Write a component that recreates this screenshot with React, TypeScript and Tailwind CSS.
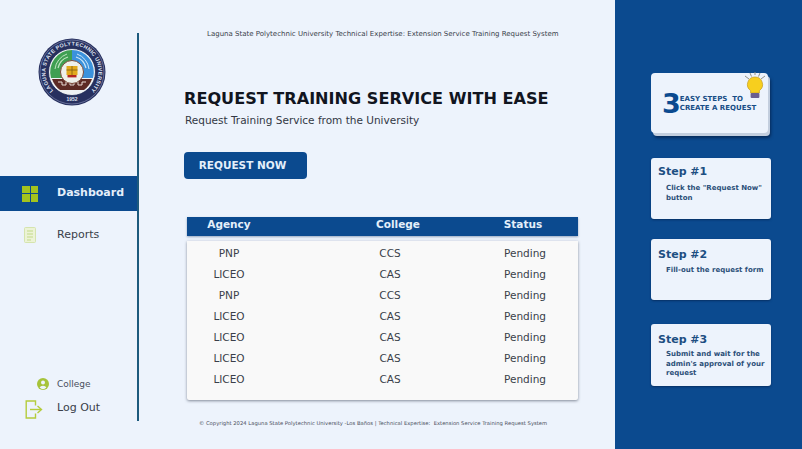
import React from 'react';

const rows = [
  ['PNP', 'CCS', 'Pending'],
  ['LICEO', 'CAS', 'Pending'],
  ['PNP', 'CCS', 'Pending'],
  ['LICEO', 'CAS', 'Pending'],
  ['LICEO', 'CAS', 'Pending'],
  ['LICEO', 'CAS', 'Pending'],
  ['LICEO', 'CAS', 'Pending'],
];

const steps = [
  { title: 'Step #1', text: 'Click the "Request Now" button', h: 'h-[61px]', mt: 'mt-[25px]', pt: 'pt-[7px]', gap: 'mt-[5px]' },
  { title: 'Step #2', text: 'Fill-out the request form', h: 'h-[61px]', mt: 'mt-[20px]', pt: 'pt-[9px]', gap: 'mt-[4px]' },
  { title: 'Step #3', text: "Submit and wait for the admin's approval of your request", h: 'h-[62px]', mt: 'mt-[24px]', pt: 'pt-[9px]', gap: 'mt-[3px]' },
];

const Seal: React.FC = () => (
  <svg width="68" height="68" viewBox="0 0 68 68">
    <defs>
      <path id="sealTop" d="M34 34 m-26.5 0 a26.5 26.5 0 1 1 53 0 a26.5 26.5 0 1 1 -53 0" />
    </defs>
    <circle cx="34" cy="34" r="33.5" fill="#27305f" />
    <circle cx="34" cy="34" r="32" fill="none" stroke="#8f97bd" strokeWidth="0.6" />
    <text transform="rotate(-45 34 34)" fontSize="5.4" fontWeight="700" fill="#dfe3f2" fontFamily="'Liberation Sans',sans-serif">
      <textPath href="#sealTop" textLength="124" lengthAdjust="spacing">LAGUNA STATE POLYTECHNIC UNIVERSITY</textPath>
    </text>
    <text x="34" y="63" textAnchor="middle" fontSize="5" fontWeight="700" fill="#dfe3f2" fontFamily="'Liberation Sans',sans-serif">1952</text>
    <circle cx="34" cy="34" r="23.5" fill="#eef1f3" stroke="#1e2a55" strokeWidth="0.8" />
    <path d="M34 12 A22 22 0 0 0 13 40 L34 40 Z" fill="#3f9f52" />
    <path d="M34 12 A22 22 0 0 1 55 40 L34 40 Z" fill="#3b92dc" />
    <path d="M20 30 A15 15 0 0 1 30 19" fill="none" stroke="#bfe3c2" strokeWidth="1.2" />
    <path d="M17 31 A18 18 0 0 1 29 16" fill="none" stroke="#bfe3c2" strokeWidth="1" />
    <path d="M48 30 A15 15 0 0 0 38 19" fill="none" stroke="#cde6f8" strokeWidth="1.2" />
    <path d="M51 31 A18 18 0 0 0 39 16" fill="none" stroke="#cde6f8" strokeWidth="1" />
    <path d="M14 41 L54 41 A22 22 0 0 1 46 52 L22 52 A22 22 0 0 1 14 41 z" fill="#5d2b24" />
    <path d="M20 44 h4 v3 h4 v-3 h4 v3 h4 v-3 h4 v3 h4 v-3 h4" fill="none" stroke="#e9dcd5" strokeWidth="1" />
    <circle cx="34" cy="34" r="11.5" fill="#eef0ea" stroke="#7a4a3a" strokeWidth="1" />
    <rect x="28.5" y="28" width="11" height="9" fill="#e2a91c" />
    <path d="M28.5 32 h11" stroke="#7d5a12" strokeWidth="0.8" />
    <path d="M34 28 v9" stroke="#7d5a12" strokeWidth="0.8" />
    <rect x="29.5" y="37" width="9" height="2.4" fill="#b3261e" />
  </svg>
);

const Bulb: React.FC = () => (
  <svg width="24" height="27" viewBox="0 0 24 27">
    <g stroke="#8f8f86" strokeWidth="1">
      <path d="M2 4 L6 7" />
      <path d="M12 0 V3" />
      <path d="M22 4 L18 7" />
      <path d="M7 1 L8.5 4.5" />
      <path d="M17 1 L15.5 4.5" />
    </g>
    <path d="M12 5 a7.5 7.5 0 0 1 4.4 13.6 V21 H7.6 v-2.4 A7.5 7.5 0 0 1 12 5 z" fill="#f7cf1e" stroke="#c49b1f" strokeWidth="0.7" />
    <rect x="7.6" y="21" width="8.8" height="5" rx="1" fill="#6b5f8f" />
  </svg>
);

const ReportIcon: React.FC = () => (
  <svg width="14" height="18" viewBox="0 0 14 18" fill="none">
    <rect x="1.5" y="1.5" width="11" height="15" rx="1" fill="#ecf3d6" stroke="#d5e4ae" />
    <path d="M4 5h6M4 8h6M4 11h6M4 14h4" stroke="#c3d98a" strokeWidth="1" />
  </svg>
);

const LogOutIcon: React.FC = () => (
  <svg width="18" height="19" viewBox="0 0 18 19" fill="none" stroke="#b4cc3c" strokeWidth="1.4">
    <path d="M10.5 5.5 V1 H1.2 V18 H10.5 V13.5" />
    <path d="M5 9.5 H16" />
    <path d="M12.5 6 L16.5 9.5 L12.5 13" />
  </svg>
);

export default function App() {
  return (
    <div className="flex h-[449px] w-[802px] overflow-hidden bg-[#edf3fc] font-['DejaVu_Sans',sans-serif] text-[#2a2f3a]">
      <aside className="mt-[33px] flex h-[388px] w-[139px] shrink-0 flex-col border-r-2 border-[#1d5a7d]">
        <div className="ml-[38px] mt-[5px]">
          <Seal />
        </div>
        <div className="mt-[70px] flex h-[35px] items-center bg-[#0b4a8f] pl-[22px]">
          <div className="grid h-[16px] w-[16px] grid-cols-2 gap-px">
            <span className="bg-[#a3c31e]" />
            <span className="bg-[#a3c31e]" />
            <span className="bg-[#a3c31e]" />
            <span className="bg-[#a3c31e]" />
          </div>
          <span className="ml-[19px] text-[11px] font-bold text-[#e4effa]">Dashboard</span>
        </div>
        <div className="mt-[15px] flex items-center pl-[23px]">
          <ReportIcon />
          <span className="ml-[20px] text-[11px] text-[#3a3f4a]">Reports</span>
        </div>
        <div className="mt-auto flex items-center pl-[37px]">
          <svg width="12" height="12" viewBox="0 0 12 12">
            <circle cx="6" cy="6" r="6" fill="#a6c33a" />
            <circle cx="6" cy="4.6" r="2" fill="#edf3fc" />
            <path d="M2.6 9.6 a3.6 2.6 0 0 1 6.8 0 a5 5 0 0 1 -6.8 0z" fill="#edf3fc" />
          </svg>
          <span className="ml-[8px] text-[9px] text-[#4a4f5c]">College</span>
        </div>
        <div className="mb-[2px] mt-[9px] flex items-center pl-[25px]">
          <LogOutIcon />
          <span className="ml-[14px] -translate-y-[1px] text-[11px] text-[#3a3f4a]">Log Out</span>
        </div>
      </aside>

      <main className="flex w-[476px] shrink-0 flex-col">
        <p className="ml-[68px] mt-[30px] text-[7px] leading-[9px] text-[#3a3f4a]">
          Laguna State Polytechnic University Technical Expertise: Extension Service Training Request System
        </p>
        <h1 className="ml-[45px] mt-[49px] text-[16.1px] font-bold leading-[22px] text-[#11151f]">
          REQUEST TRAINING SERVICE WITH EASE
        </h1>
        <p className="ml-[46px] mt-[0px] text-[10.5px] leading-[20px] text-[#333844]">
          Request Training Service from the University
        </p>
        <button className="ml-[45px] mt-[22px] h-[27px] w-[123px] rounded-[4px] bg-[#0b4a8f] pr-[6px] pt-[1px] text-[10.5px] font-bold text-[#e4effa]">
          REQUEST NOW
        </button>
        <div className="ml-[48px] mt-[38px] w-[391px]">
          <div className="flex h-[19px] bg-[#0b4a8f] text-center text-[10.5px] font-bold leading-[14px] text-[#e4effa] shadow-[0_1px_2px_rgba(60,90,130,0.5)]">
            <span className="w-[84px]">Agency</span>
            <span className="ml-[87px] w-[80px]">College</span>
            <span className="ml-[45px] w-[80px]">Status</span>
          </div>
          <div className="mt-[5px] h-[159px] rounded-b-[2px] bg-[#f9f9f9] pt-[2px] text-[10.5px] text-[#3a3f4a] shadow-[0_1px_3px_rgba(40,50,70,0.55)]">
            {rows.map((r, i) => (
              <div key={i} className="flex h-[21px] items-center text-center leading-[21px]">
                <span className="w-[84px]">{r[0]}</span>
                <span className="ml-[44px] w-[150px]">{r[1]}</span>
                <span className="ml-[20px] w-[80px]">{r[2]}</span>
              </div>
            ))}
          </div>
        </div>
        <p className="ml-[60px] mt-[20px] whitespace-nowrap text-[5.25px] leading-[7px] text-[#4a4f5c]">
          © Copyright 2024 Laguna State Polytechnic University -Los Baños | Technical Expertise: &nbsp;Extension Service Training Request System
        </p>
      </main>

      <section className="flex flex-1 flex-col bg-[#0b4a8f] pl-[36px] pt-[73px]">
        <div className="relative flex h-[60px] w-[117px] items-center rounded-[4px] bg-[#edf3fc] pl-[11px] pt-[1px] shadow-[2px_3px_0_#c3cede,3px_5px_3px_rgba(3,30,70,0.7)]">
          <span className="text-[27px] font-bold leading-[24px] text-[#0b4a8f]">3</span>
          <span className="-ml-[1px] text-[7px] font-bold leading-[9px] text-[#174d86]">
            EASY STEPS &nbsp;TO
            <br />
            <span className="whitespace-nowrap">CREATE A REQUEST</span>
          </span>
          <div className="absolute right-[1px] top-[-1px]">
            <Bulb />
          </div>
        </div>
        {steps.map((s) => (
          <div key={s.title} className={`${s.mt} ${s.h} ${s.pt} w-[120px] rounded-[3px] bg-[#edf3fc] pl-[7px] shadow-[0_1px_2px_rgba(3,30,70,0.6)]`}>
            <h3 className="text-[11px] font-bold leading-[14px] text-[#1d4f82]">{s.title}</h3>
            <p className={`${s.gap} ml-[8px] mr-[2px] text-[7px] font-bold leading-[9.5px] text-[#2b4f78]`}>{s.text}</p>
          </div>
        ))}
      </section>
    </div>
  );
}
